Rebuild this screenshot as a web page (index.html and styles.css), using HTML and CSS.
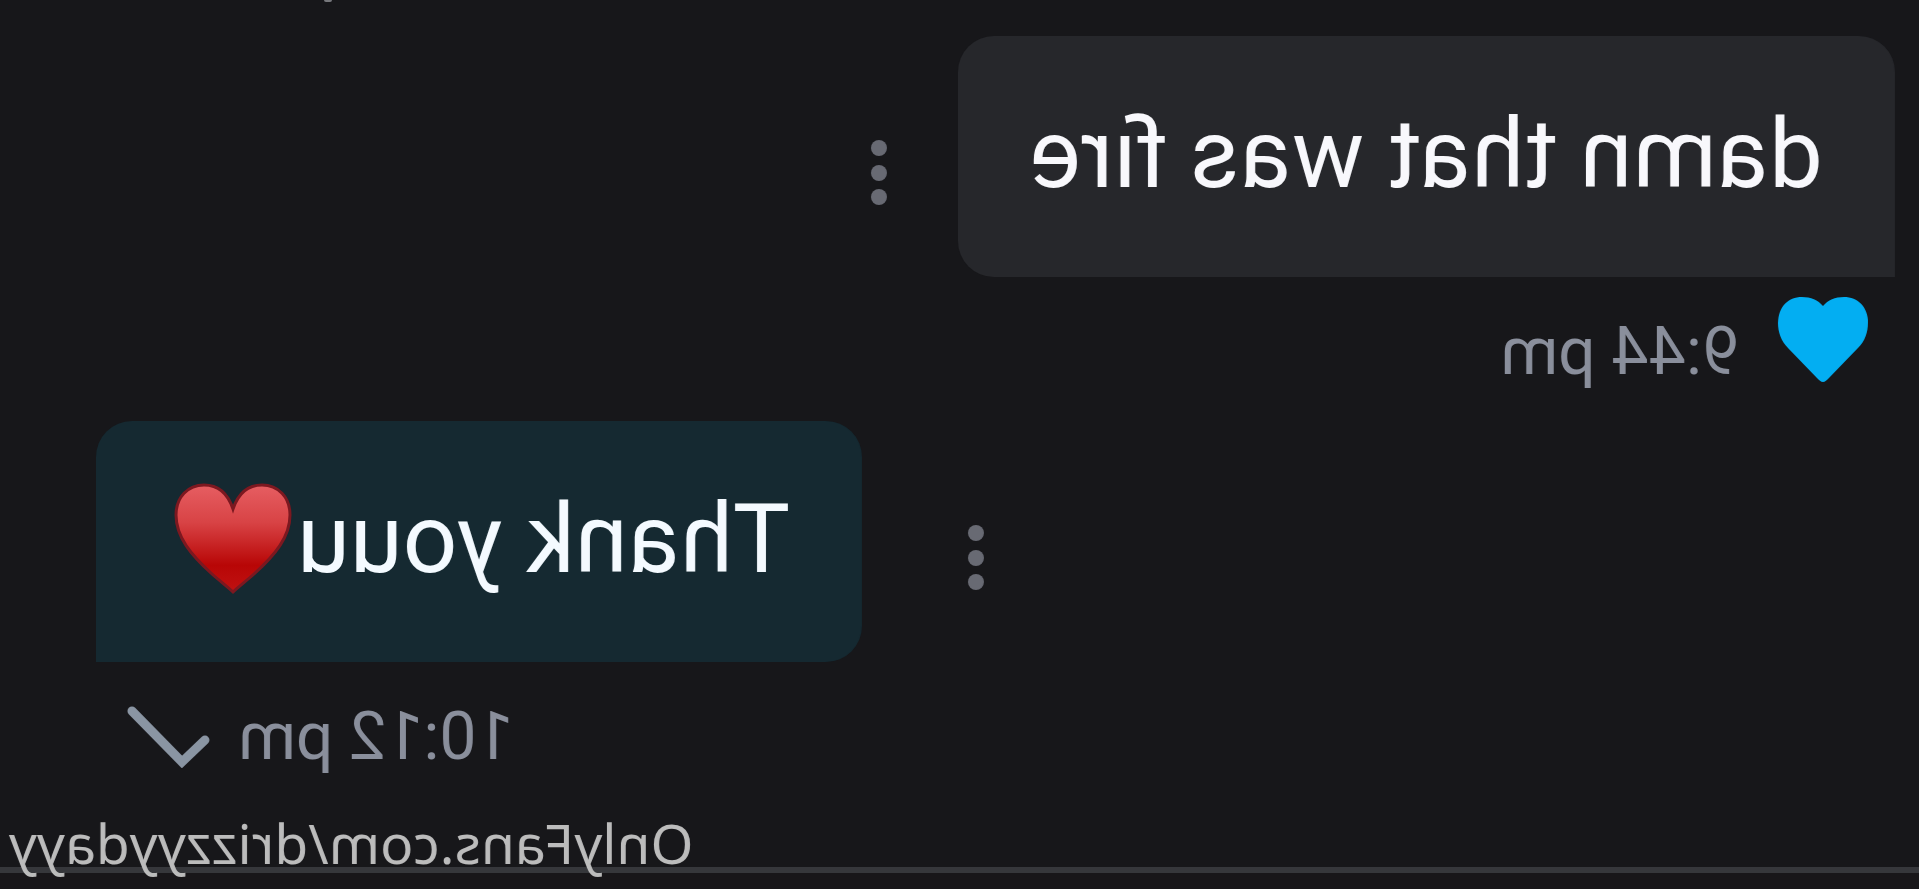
FILE: index.html
```
<!DOCTYPE html>
<html lang="en">
<head>
    <meta charset="UTF-8">
    <meta name="viewport" content="width=device-width, initial-scale=1.0">
    <title>Messages</title>
    <link rel="stylesheet" href="styles.css">
</head>
<body>

    <div class="page">
        <div class="previous"></div>
        <main class="chat">
            <div class="message">
                <div class="row">
                    <p class="bubble">damn that was fire</p>
                    <button type="button" class="menu" aria-label="Message options">
                        <svg width="18" height="68" viewBox="0 0 18 68">
                            <circle cx="9" cy="9" r="8"/>
                            <circle cx="9" cy="34" r="8"/>
                            <circle cx="9" cy="58" r="8"/>
                        </svg>
                    </button>
                </div>
                <div class="meta">
                    <svg class="like" width="92" height="86" viewBox="0 0 92 86">
                        <path d="M46 86C44 86 42 84 40 82L11 52C4 45 1 36 1 27C1 11 11 1 25 1C34 1 41 4 46 10C51 4 58 1 67 1C81 1 91 11 91 27C91 36 88 45 81 52L52 82C50 84 48 86 46 86Z"/>
                    </svg>
                    <time>9:44 pm</time>
                </div>
            </div>

            <div class="message sent">
                <div class="row">
                    <button type="button" class="menu" aria-label="Message options">
                        <svg width="18" height="68" viewBox="0 0 18 68">
                            <circle cx="9" cy="9" r="8"/>
                            <circle cx="9" cy="34" r="8"/>
                            <circle cx="9" cy="58" r="8"/>
                        </svg>
                    </button>
                    <p class="bubble">Thank youu<svg class="heart" width="118" height="112" viewBox="0 0 118 112" role="img" aria-label="red heart">
                        <defs>
                            <linearGradient id="red" x1="0" y1="0" x2="0" y2="1">
                                <stop offset="0" stop-color="#e65e62"/>
                                <stop offset="0.35" stop-color="#d84345"/>
                                <stop offset="0.75" stop-color="#b80606"/>
                                <stop offset="1" stop-color="#c01212"/>
                            </linearGradient>
                        </defs>
                        <path d="M59 109C54 104 47 99 38 91C17 72 2 54 2 32C2 14 14 2 30 2C44 2 54 11 59 26C64 11 74 2 88 2C104 2 116 14 116 32C116 54 101 72 80 91C71 99 64 104 59 109Z"/>
                    </svg></p>
                </div>
                <div class="meta">
                    <time>10:12 pm</time>
                    <svg class="check" width="84" height="64" viewBox="0 0 84 64">
                        <path d="M5 36L28 58L78 7"/>
                    </svg>
                </div>
            </div>
        </main>
        <footer class="bottom">
            <a class="watermark" href="#">OnlyFans.com/drizzyydayy</a>
        </footer>
    </div>

</body>
</html>
```

FILE: styles.css
```
body {
    margin: 0;
    background-color: #17171a;
    font-family: Roboto, Arial, sans-serif;
}
/* the whole conversation is shown flipped */
.page {
    display: flex;
    flex-direction: column;
    min-height: 100vh;
    overflow: hidden;
    transform: scaleX(-1);
}
/* tail of the message scrolled off the top */
.previous {
    width: 8px;
    height: 2px;
    margin: 0 324px 0 auto;
    border-radius: 0 0 4px 4px;
    background-color: #77787c;
}
.chat {
    flex: 1;
    padding: 34px 96px 0 24px;
}
.row {
    display: flex;
    align-items: center;
    gap: 70px;
}
.bubble {
    margin: 0;
    padding: 62px 72px 67px;
    border-radius: 36px 36px 36px 0;
    background-color: #26272b;
    color: #f8f8fc;
    font-size: 96px;
    line-height: 112px;
    white-space: nowrap;
}
.menu {
    padding: 32px 0 0;
    border: 0;
    background: none;
    cursor: pointer;
}
.menu svg {
    display: block;
    fill: #686a73;
}
.meta {
    box-sizing: border-box;
    display: flex;
    align-items: center;
    gap: 38px;
    height: 144px;
    padding: 4px 0 0 26px;
    color: #8a8f9c;
    font-size: 66px;
}
.like {
    margin-bottom: 24px;
    fill: #03aef2;
}
.sent .row {
    justify-content: flex-end;
    gap: 105px;
}
.sent .bubble {
    border-radius: 36px 36px 0 36px;
    background-color: #152931;
    color: #f4faff;
}
.heart {
    margin: -20px 6px -20px 5px;
    vertical-align: -3px;
}
.heart path {
    fill: url(#red);
    stroke: #7c1820;
    stroke-width: 3;
}
.sent .meta {
    justify-content: flex-end;
    gap: 28px;
    padding: 4px 30px 0 0;
}
.check {
    fill: none;
    stroke: #8a95a3;
    stroke-width: 9;
    stroke-linecap: round;
}
.bottom {
    position: relative;
    height: 16px;
    border-top: 6px solid #36373b;
    background-color: #181619;
}
.watermark {
    position: absolute;
    right: 9px;
    bottom: 14px;
    color: #bcbcbc;
    font-family: "Noto Sans", "Open Sans", sans-serif;
    font-size: 55px;
    line-height: 64px;
    text-decoration: none;
}
```
